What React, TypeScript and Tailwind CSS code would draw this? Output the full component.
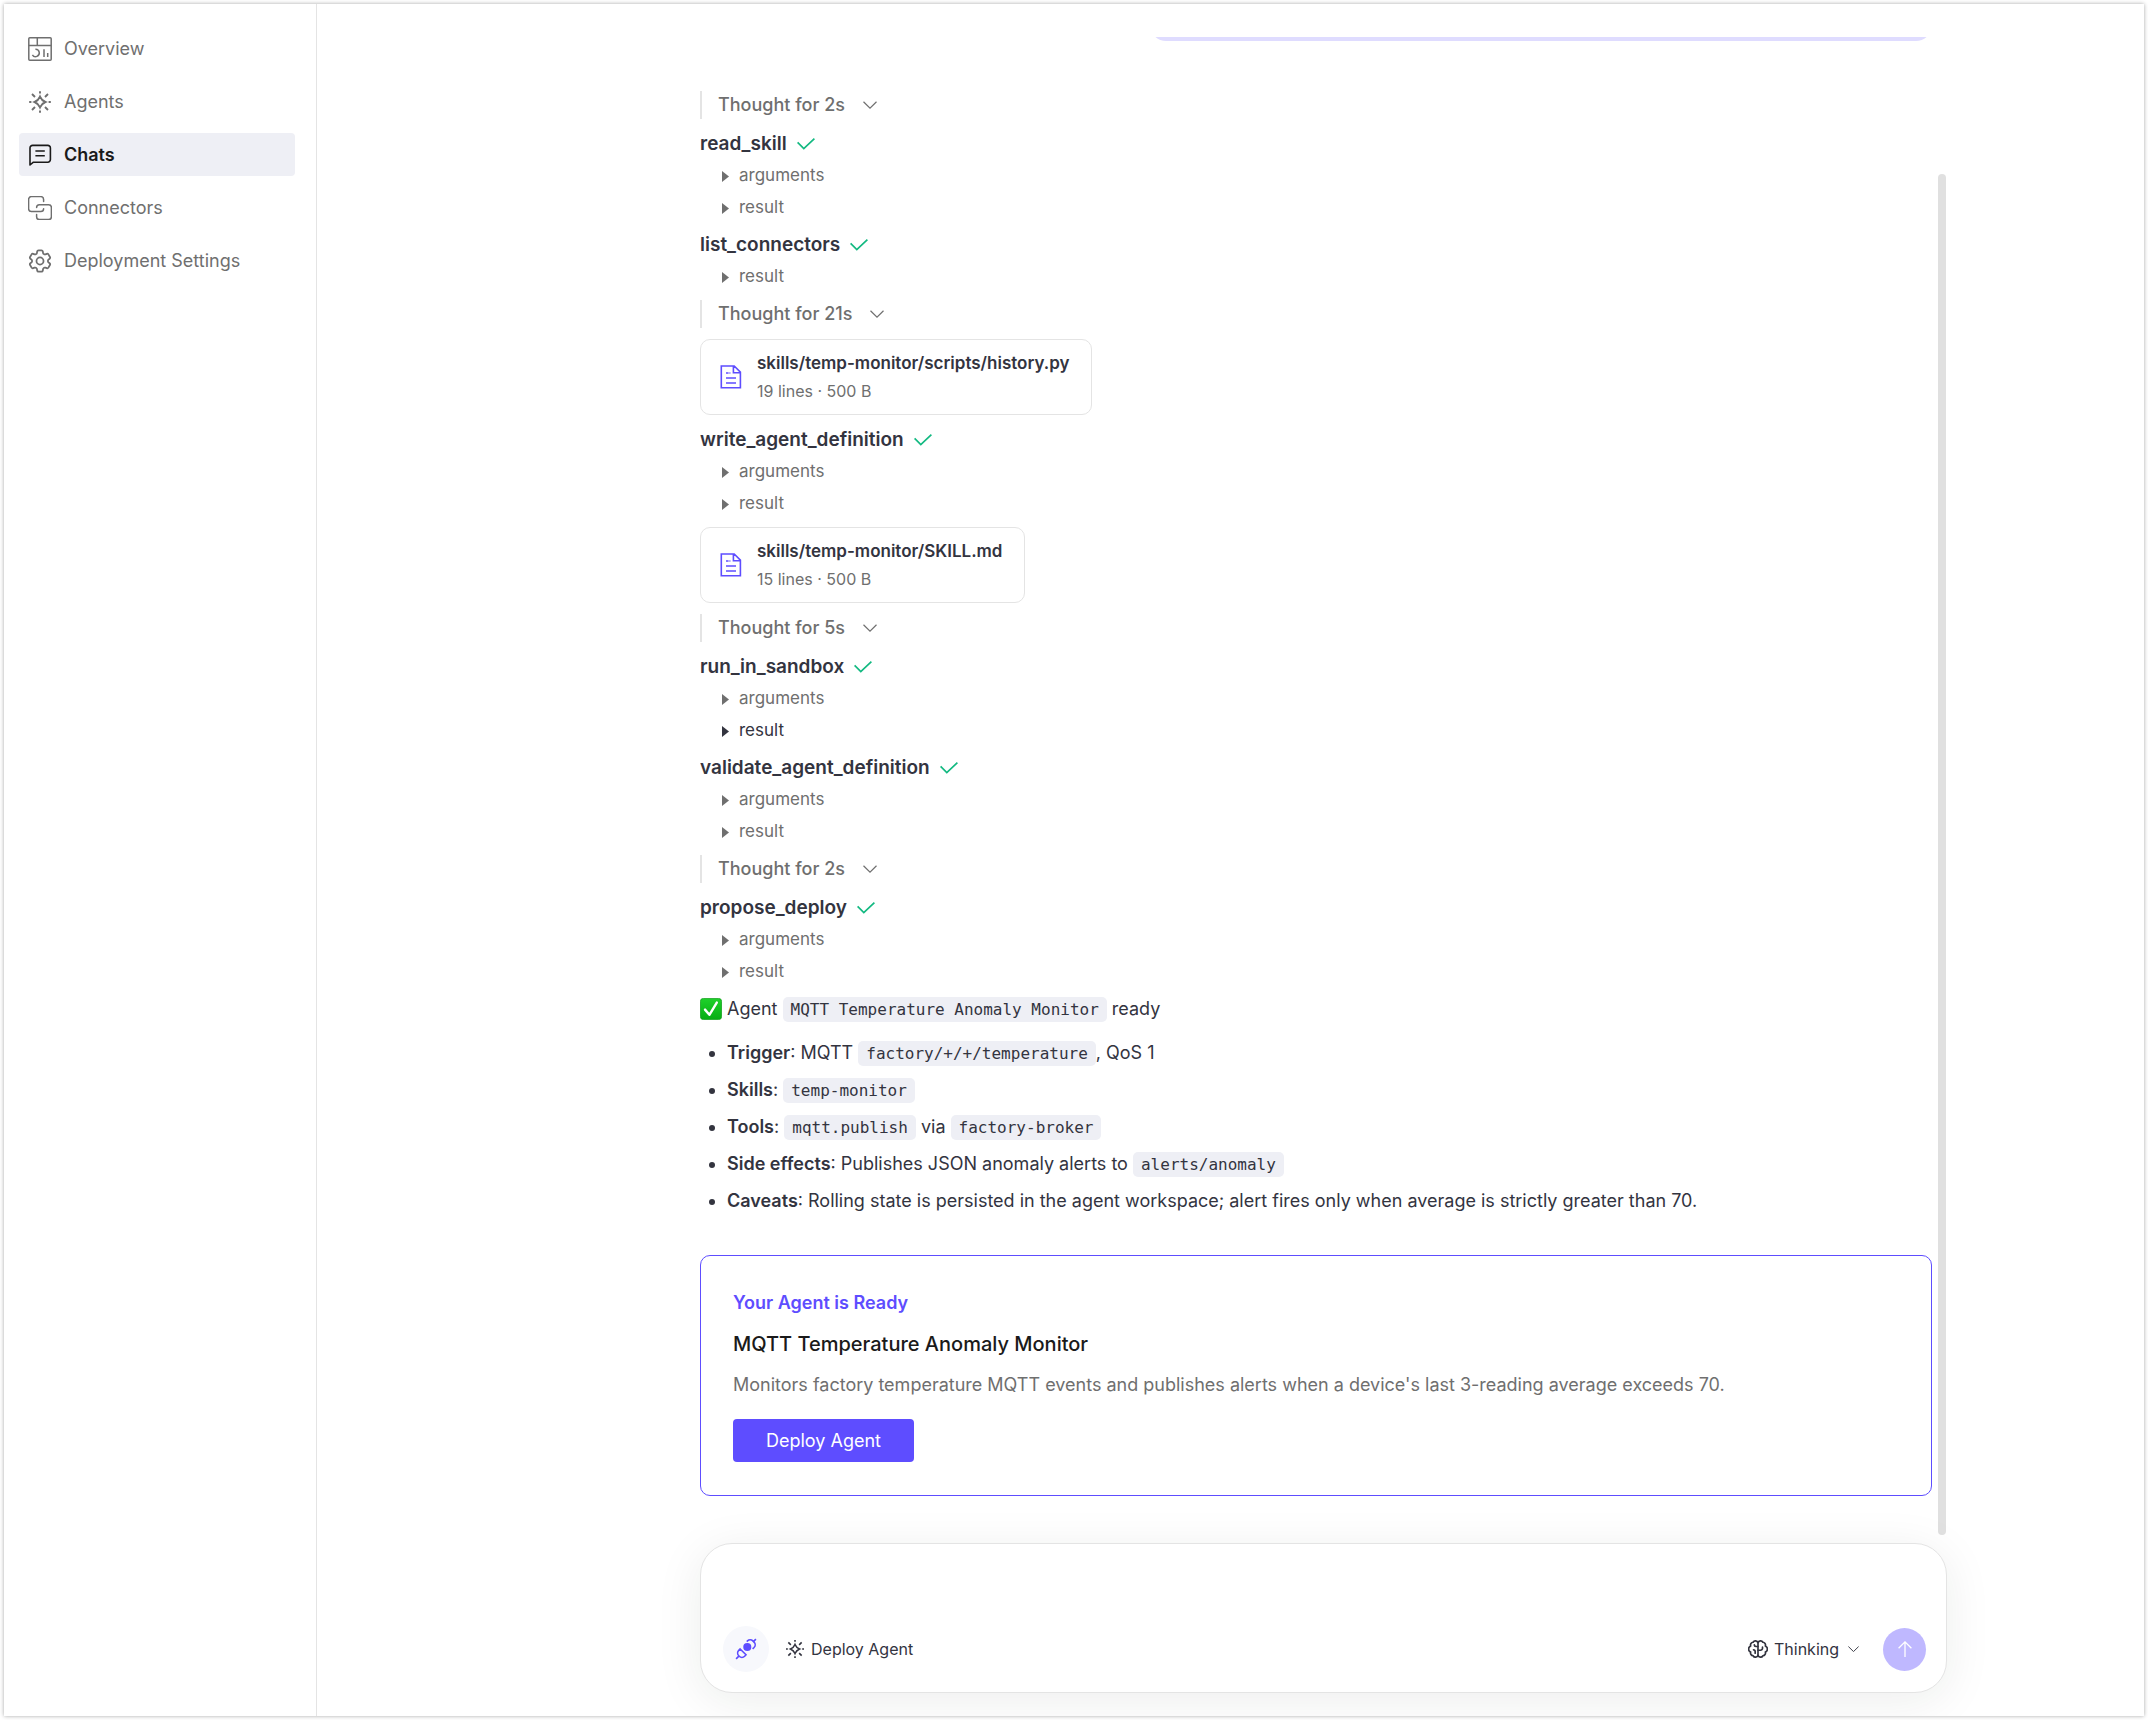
import React from "react";
import { HiOutlineCog6Tooth } from "react-icons/hi2";

interface IconProps {
  className?: string;
}

interface NavItem {
  label: string;
  icon: React.FC<IconProps>;
  active?: boolean;
}

const OverviewIcon: React.FC<IconProps> = ({ className }) => (
  <svg viewBox="0 0 24 24" fill="none" stroke="currentColor" strokeWidth="1.5" className={className}>
    <rect x="0.8" y="0.8" width="22.4" height="22.4" rx="1" />
    <path d="M0.8 8.5h22.4M9.3 0.8v7.7M7.4 12.2a3.7 3.7 0 1 1-3 5.6M16 12.2V20M19.7 16v4" />
  </svg>
);

const AgentIcon: React.FC<IconProps> = ({ className }) => (
  <svg viewBox="0 0 24 24" fill="none" stroke="currentColor" strokeWidth="1.9" className={className}>
    <path d="M12 6.6Q13.6 10.4 17.4 12Q13.6 13.6 12 17.4Q10.4 13.6 6.6 12Q10.4 10.4 12 6.6Z" />
    <path d="M12 1.2v2.2M12 20.6v2.2M1.2 12h2.2M20.6 12h2.2M4 4l3 3M20 4l-3 3M4 20l3-3M20 20l-3-3" />
  </svg>
);

const ChatIcon: React.FC<IconProps> = ({ className }) => (
  <svg viewBox="0 0 24 24" fill="none" stroke="currentColor" strokeWidth="1.6" strokeLinejoin="round" className={className}>
    <path d="M2 22V5a2.6 2.6 0 0 1 2.6-2.6h15.2A2.6 2.6 0 0 1 22.4 5v11.6a2.6 2.6 0 0 1-2.6 2.6H5.4Z" />
    <path d="M7.4 8h9.4M7.4 12.7h9.4" />
  </svg>
);

const ConnectorIcon: React.FC<IconProps> = ({ className }) => (
  <svg viewBox="0 0 24 24" fill="none" stroke="currentColor" strokeWidth="1.5" strokeLinecap="round" className={className}>
    <path d="M15.6 5.6V3.4A2.8 2.8 0 0 0 12.8.6H3.4A2.8 2.8 0 0 0 .6 3.4v9.4a2.8 2.8 0 0 0 2.8 2.8h9.4a2.8 2.8 0 0 0 2.8-2.8" />
    <path d="M8.6 18.4v2.4a2.8 2.8 0 0 0 2.8 2.8h9.2a2.8 2.8 0 0 0 2.8-2.8v-9.2a2.8 2.8 0 0 0-2.8-2.8h-9.2a2.8 2.8 0 0 0-2.8 2.8" />
  </svg>
);

const SettingsIcon: React.FC<IconProps> = ({ className }) => (
  <HiOutlineCog6Tooth viewBox="1.8 1.8 20.4 20.4" className={className} />
);

const FileIcon: React.FC<IconProps> = ({ className }) => (
  <svg viewBox="0 0 22 24" fill="none" stroke="currentColor" strokeWidth="1.6" className={className}>
    <path d="M1.3 1h12.9l6.2 6.2v15.5H1.3ZM13.4 1v6.8h7M6 8h2.6M9.4 8h1M6 13h10M6 18h10" />
  </svg>
);

const PlugIcon: React.FC<IconProps> = ({ className }) => (
  <svg viewBox="0 0 24 24" fill="none" stroke="currentColor" strokeWidth="1.8" className={className}>
    <path d="M1.2 22.8l3-3M19.8 4.2l3-3" />
    <path d="M5.6 12l6.4 6.2-1.5 1.7a4.2 4.2 0 0 1-5.9 0l-.5-.5a4.2 4.2 0 0 1 0-5.9Z" />
    <path d="M12.8 3.9l.8-.7a4.2 4.2 0 0 1 5.9 0l1.3 1.3a4.2 4.2 0 0 1 0 5.9l-1.6 1.5" />
    <circle cx="13.4" cy="9.9" r="4.4" fill="currentColor" stroke="none" />
  </svg>
);

const BrainIcon: React.FC<IconProps> = ({ className }) => (
  <svg viewBox="0 0 24 24" fill="none" stroke="currentColor" strokeWidth="2" strokeLinecap="round" strokeLinejoin="round" className={className}>
    <path d="M12 4.5a3.2 3.2 0 0 0-5.9-.6 3.3 3.3 0 0 0-2.9 4.4 4 4 0 0 0 0 7.4 3.3 3.3 0 0 0 2.9 4.4 3.2 3.2 0 0 0 5.9-.6Z" />
    <path d="M12 4.5a3.2 3.2 0 0 1 5.9-.6 3.3 3.3 0 0 1 2.9 4.4 4 4 0 0 1 0 7.4 3.3 3.3 0 0 1-2.9 4.4 3.2 3.2 0 0 1-5.9-.6" />
    <path d="M12 13.5h3a2.4 2.4 0 0 0 2.4-2.4V9.8M12 9H9.6a2 2 0 0 1-2-2M8.6 17v-2a2 2 0 0 0-2-2" />
  </svg>
);

const ChevronIcon: React.FC<IconProps> = ({ className }) => (
  <svg viewBox="0 0 14 8" fill="none" stroke="currentColor" strokeWidth="1.2" className={className}>
    <path d="M0.5 0.7l6.5 6.4 6.5-6.4" />
  </svg>
);

const CheckIcon: React.FC<IconProps> = ({ className }) => (
  <svg viewBox="0 0 18 12" fill="none" stroke="currentColor" strokeWidth="1.7" className={className}>
    <path d="M0.6 4.4l6.2 6.2L17.4 0.7" />
  </svg>
);

const ArrowUpIcon: React.FC<IconProps> = ({ className }) => (
  <svg viewBox="0 0 14 16" fill="none" stroke="currentColor" strokeWidth="1.3" className={className}>
    <path d="M7 16V1M0.6 7.3L7 0.9l6.4 6.4" />
  </svg>
);

const DoneBadge: React.FC<IconProps> = ({ className }) => (
  <svg viewBox="0 0 22 22" className={className} role="img" aria-label="Done">
    <defs>
      <linearGradient id="done" x1="0" y1="0" x2="0" y2="1">
        <stop offset="0" stopColor="#1fd12b" />
        <stop offset="1" stopColor="#06ad13" />
      </linearGradient>
    </defs>
    <rect x="0.4" y="0.4" width="21.2" height="21.2" rx="3" fill="url(#done)" stroke="#12a01c" strokeWidth="0.8" />
    <path d="M5 11.6l4.4 5.2L16.8 4.6" fill="none" stroke="#fff" strokeWidth="2.4" strokeLinecap="round" strokeLinejoin="round" />
  </svg>
);

const navItems: NavItem[] = [
  { label: "Overview", icon: OverviewIcon },
  { label: "Agents", icon: AgentIcon },
  { label: "Chats", icon: ChatIcon, active: true },
  { label: "Connectors", icon: ConnectorIcon },
  { label: "Deployment Settings", icon: SettingsIcon },
];

const Sidebar: React.FC = () => (
  <aside className="w-[313px] shrink-0 border-r border-[#e4e4e4] pt-[23px] pr-[21px] pl-[15px]">
    <nav className="flex flex-col gap-[10px]">
      {navItems.map(({ label, icon: Icon, active }) => (
        <a
          key={label}
          href="#"
          className={
            active
              ? "flex h-[43px] items-center gap-3 rounded bg-[#eeeff5] px-[9px] text-lg font-semibold text-[#1a1a1a]"
              : "flex h-[43px] items-center gap-3 rounded px-[9px] text-lg text-[#6f6f6f]"
          }
        >
          <Icon className="size-6" />
          {label}
        </a>
      ))}
    </nav>
  </aside>
);

const Thought: React.FC<{ time: string }> = ({ time }) => (
  <button className="flex h-7 items-center gap-[18px] border-l-2 border-[#e4e4e4] pl-4 text-lg font-medium text-[#6f6f6f]">
    Thought for {time}
    <ChevronIcon className="w-[14px]" />
  </button>
);

const ToolCall: React.FC<{ name: string; parts: string[]; hovered?: string }> = ({
  name,
  parts,
  hovered,
}) => (
  <section className="text-[#33343f]">
    <h3 className="mb-[6px] flex h-7 items-center gap-[10px] text-[19px] font-semibold">
      {name}
      <CheckIcon className="w-[18px] text-[#12b981]" />
    </h3>
    <div className="flex flex-col gap-2 pl-[22px]">
      {parts.map((part) => (
        <details key={part} className={part === hovered ? "text-[#33343f]" : "text-[#6f6f6f]"}>
          <summary className="flex h-6 list-none items-center gap-[10px] text-[17px]">
            <svg viewBox="0 0 7 11" className="w-[7px]" fill="currentColor">
              <path d="M0 0l7 5.5L0 11Z" />
            </svg>
            {part}
          </summary>
        </details>
      ))}
    </div>
  </section>
);

const FileCard: React.FC<{ path: string; meta: string }> = ({ path, meta }) => (
  <button className="flex h-[76px] items-center gap-[15px] rounded-[10px] border border-[#e4e4e4] pr-[22px] pl-[19px] text-left">
    <FileIcon className="w-[22px] text-[#5e4dff]" />
    <span className="flex flex-col gap-1">
      <span className="text-[17px] leading-6 font-semibold text-[#33343f]">{path}</span>
      <span className="text-base leading-6 text-[#6f6f6f]">{meta}</span>
    </span>
  </button>
);

const Code: React.FC<{ children: string }> = ({ children }) => (
  <code className="rounded-[5px] bg-[#eeeff5] px-2 py-[3px] font-['DejaVu_Sans_Mono',monospace] text-base">
    {children}
  </code>
);

const Summary: React.FC = () => (
  <div className="text-lg leading-7 text-[#33343f]">
    <p className="mb-4 flex items-center">
      <DoneBadge className="mr-[5px] size-[22px]" />
      <span>
        Agent <Code>MQTT Temperature Anomaly Monitor</Code> ready
      </span>
    </p>
    <ul className="flex list-disc flex-col gap-[9px] pl-[27px]">
      <li>
        <b className="font-semibold">Trigger</b>: MQTT <Code>factory/+/+/temperature</Code>, QoS 1
      </li>
      <li>
        <b className="font-semibold">Skills</b>: <Code>temp-monitor</Code>
      </li>
      <li>
        <b className="font-semibold">Tools</b>: <Code>mqtt.publish</Code> via <Code>factory-broker</Code>
      </li>
      <li>
        <b className="font-semibold">Side effects</b>: Publishes JSON anomaly alerts to{" "}
        <Code>alerts/anomaly</Code>
      </li>
      <li>
        <b className="font-semibold">Caveats</b>: Rolling state is persisted in the agent workspace;
        alert fires only when average is strictly greater than 70.
      </li>
    </ul>
  </div>
);

const ReadyCard: React.FC = () => (
  <section className="rounded-[10px] border border-[#5e4dff] px-8 py-[33px]">
    <p className="text-lg leading-7 font-semibold text-[#5e4dff]">Your Agent is Ready</p>
    <h2 className="mt-[13px] text-xl leading-7 font-medium text-[#1a1a1a]">
      MQTT Temperature Anomaly Monitor
    </h2>
    <p className="mt-[13px] text-lg leading-7 text-[#6f6f6f]">
      Monitors factory temperature MQTT events and publishes alerts when a device's last 3-reading
      average exceeds 70.
    </p>
    <button className="mt-5 h-[43px] rounded bg-[#5e4dff] px-[33px] text-lg text-white">
      Deploy Agent
    </button>
  </section>
);

const Composer: React.FC = () => (
  <form className="flex flex-col rounded-[32px] border border-[#e4e4e4] bg-white pt-5 pr-5 pb-5 pl-[22px] shadow-[0_8px_48px_rgba(20,40,30,0.08)]">
    <textarea aria-label="Message" className="h-[62px] resize-none px-3 text-lg outline-none" />
    <div className="flex items-center">
      <button
        type="button"
        aria-label="Connectors"
        className="flex size-[46px] items-center justify-center rounded-full bg-[#f7f8fc] text-[#5e4dff]"
      >
        <PlugIcon className="size-[22px]" />
      </button>
      <button type="button" className="ml-4 flex items-center gap-[6px] text-base text-[#33343f]">
        <AgentIcon className="size-5" />
        Deploy Agent
      </button>
      <label className="mr-6 ml-auto flex items-center text-base text-[#33343f]">
        <BrainIcon className="mr-[6px] size-5" />
        <select aria-label="Mode" className="appearance-none outline-none">
          <option>Thinking</option>
        </select>
        <ChevronIcon className="ml-2 w-[11px]" />
      </label>
      <button
        type="button"
        aria-label="Send"
        className="flex size-[43px] items-center justify-center rounded-full bg-[#bfb8ff] text-white"
      >
        <ArrowUpIcon className="w-[14px]" />
      </button>
    </div>
  </form>
);

const App: React.FC = () => {
  return (
    <div className="h-screen bg-white p-1 font-['Inter',sans-serif]">
      <div className="flex h-full bg-white shadow-[0_0_4px_rgba(0,0,0,0.35)]">
        <Sidebar />
        <main className="flex min-w-0 flex-1 flex-col gap-2 overflow-hidden pt-[33px] pr-[197px] pb-[23px] pl-[383px]">
          <div className="flex min-h-0 flex-1 overflow-hidden">
            <div className="flex min-w-0 flex-1 flex-col items-start gap-[11px]">
              {/* Tail of the user message that has scrolled away */}
              <div className="mb-[39px] flex h-1 w-[782px] flex-col justify-end self-end overflow-hidden">
                <div className="h-16 shrink-0 rounded-2xl bg-[#dfdcff]" />
              </div>
              <Thought time="2s" />
              <ToolCall name="read_skill" parts={["arguments", "result"]} />
              <ToolCall name="list_connectors" parts={["result"]} />
              <Thought time="21s" />
              <FileCard path="skills/temp-monitor/scripts/history.py" meta="19 lines · 500 B" />
              <ToolCall name="write_agent_definition" parts={["arguments", "result"]} />
              <FileCard path="skills/temp-monitor/SKILL.md" meta="15 lines · 500 B" />
              <Thought time="5s" />
              <ToolCall name="run_in_sandbox" parts={["arguments", "result"]} hovered="result" />
              <ToolCall name="validate_agent_definition" parts={["arguments", "result"]} />
              <Thought time="2s" />
              <ToolCall name="propose_deploy" parts={["arguments", "result"]} />
              <Summary />
              <div className="w-full pt-[29px]">
                <ReadyCard />
              </div>
            </div>
            {/* Scrollbar */}
            <div className="mr-px ml-[6px] flex w-2 flex-col pt-[137px]">
              <div className="flex-1 rounded-full bg-[#e0e0e0]" />
            </div>
          </div>
          <Composer />
        </main>
      </div>
    </div>
  );
};

export default App;
